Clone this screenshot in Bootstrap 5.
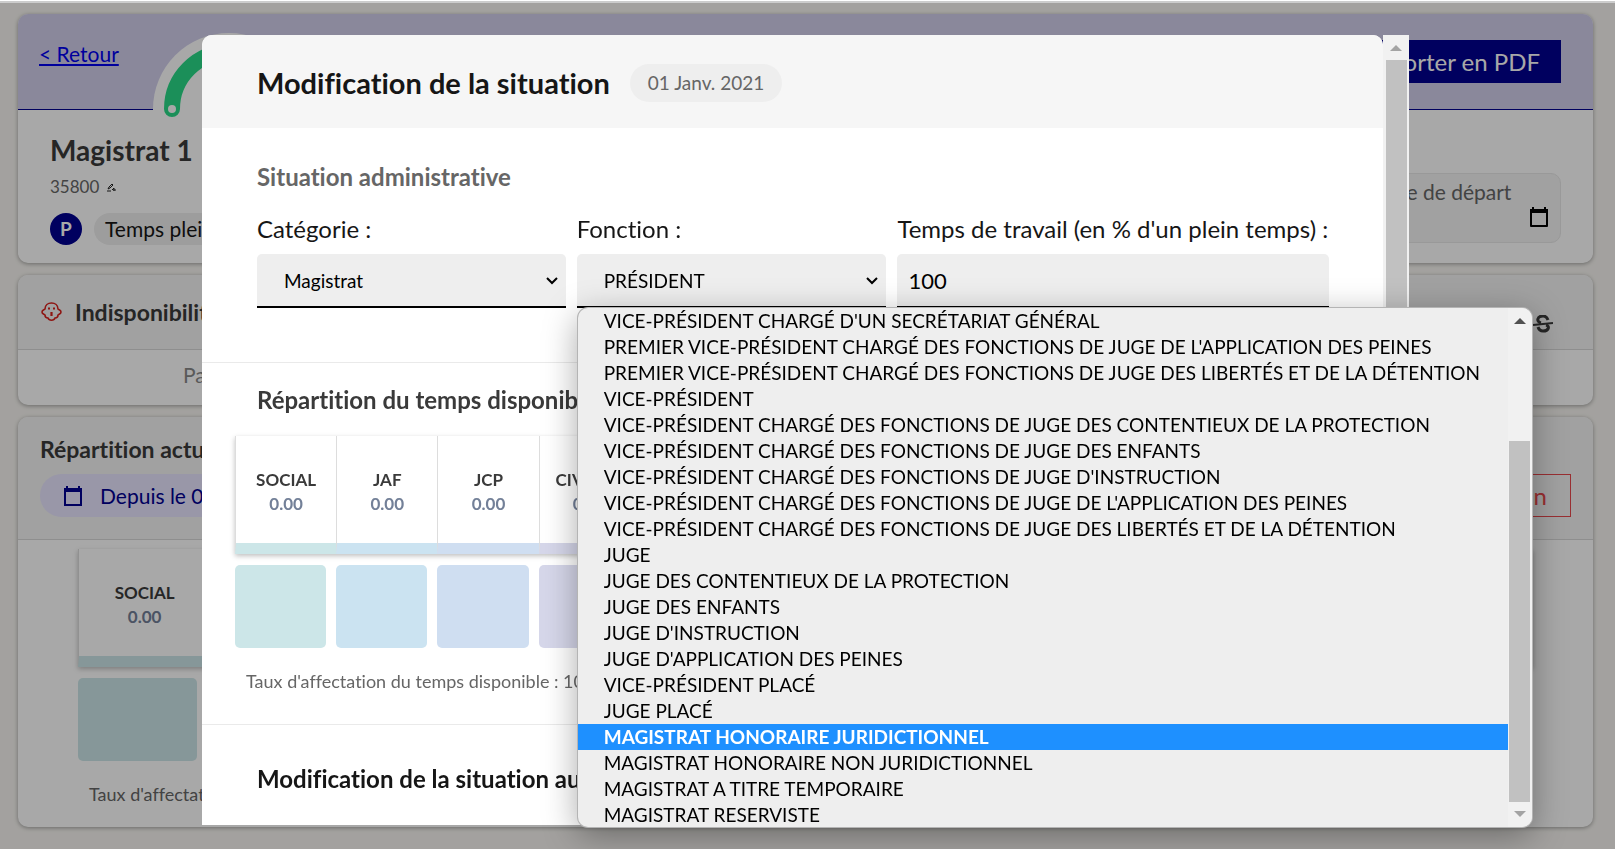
<!DOCTYPE html>
<html lang="fr">
<head>
<meta charset="utf-8">
<meta name="viewport" content="width=device-width, initial-scale=1">
<title>Modification de la situation</title>
<link href="https://cdn.jsdelivr.net/npm/bootstrap@5.3.0/dist/css/bootstrap.min.css" rel="stylesheet">
<style>
  :root { --navy: #000091; --ink: #161616; --soft-ink: #3a3a3a; --muted: #666; }
  body { font-family: Lato, "Open Sans", sans-serif; font-variant-ligatures: none; background: #f7f5f1; color: var(--ink); min-height: 100vh; overflow: hidden; }
  .topline { height: 3px; background: #ccc; border-top: 1px solid #fff; }
  .page { padding: 11px 22px 0 18px; display: grid; gap: 12px; }
  .panel { background: #fff; border-radius: 10px; box-shadow: 0 1px 4px rgba(0,0,0,.35); }
  .panel-top { background: #f4f4f4; border-bottom: 1px solid #d8d8d8; border-radius: 10px 10px 0 0; }
  .fs-title { font-size: 29px; line-height: 36px; font-weight: 700; }
  .fs-name { font-size: 28px; line-height: 34px; font-weight: 700; }
  .fs-section { font-size: 23px; line-height: 28px; font-weight: 700; }
  .fs-label { font-size: 24px; line-height: 28px; }
  .fs-text { font-size: 21px; line-height: 28px; }
  .fs-note { font-size: 17px; line-height: 24px; color: var(--muted); }
  .rate { font-size: 18px; line-height: 24px; color: var(--muted); padding: 21px 11px 22px; }
  .soft { color: var(--soft-ink); }

  /* agent sheet */
  .hero { height: 96px; background: #d2cfec; border-bottom: 1px solid var(--navy); border-radius: 10px 10px 0 0; padding: 26px 32px 0 21px; position: relative; }
  .hero a { color: #00e; }
  .gauge { position: absolute; left: 135px; top: 19px; }
  .btn-navy { background: var(--navy); color: #fff; border-radius: 0; height: 43px; padding: 0 21px; border: 0; }
  .identity { height: 153px; padding: 23px 32px 0 32px; }
  .initial { width: 32px; height: 32px; border-radius: 50%; background: var(--navy); color: #fff; font-weight: 700; font-size: 19px; }
  .tag { background: #eee; border-radius: 16px; height: 32px; padding: 2px 11px; }
  .leave { background: #f4f4f4; border: 1px solid #e8e8e8; border-radius: 10px; width: 200px; height: 70px; margin-top: 40px; padding: 4px 11px 0; color: var(--muted); }
  .leave label { padding-right: 38px; white-space: nowrap; }
  .since { background: #e8e5ff; color: var(--navy); border-radius: 22px; height: 43px; padding: 0 24px; gap: 18px; }
  .btn-cancel { color: #e8484c; border: 1px solid #e8484c; border-radius: 0; height: 43px; padding: 0 23px; }

  /* breakdown by litigation type */
  .split { display: grid; grid-template-columns: repeat(11, 1fr); }
  .split-head { box-shadow: 0 2px 5px rgba(0,0,0,.25); }
  .split-head > div { height: 118px; border-left: 1px solid #ddd; border-bottom: 11px solid; text-align: center; padding-top: 32px; font-size: 17px; line-height: 24px; font-weight: 700; color: var(--soft-ink); white-space: nowrap; }
  .split-head span { display: block; color: #738098; }
  .split-boxes { margin-top: 11px; }
  .split-boxes > div { height: 83px; border-radius: 5px; }
  .split > :nth-child(1) { --tone: #cce6e8; }
  .split > :nth-child(2) { --tone: #cbe3f1; }
  .split > :nth-child(3) { --tone: #cfdef1; }
  .split > :nth-child(n+4) { --tone: #d6d7ea; }
  .split-head > div { border-bottom-color: var(--tone); }
  .split-boxes > div { background: var(--tone); }
  .split-page { margin: 0 60px 0 60px; padding-top: 9px; }
  .split-page .split-boxes > div { margin-right: 13px; }
  .split-modal { margin: 0 35px 0 33px; }
  .split-modal .split-boxes > div { margin-right: 10px; }

  /* dialog */
  .modal-backdrop { top: 3px; height: auto; bottom: 0; opacity: .34; }
  .modal { overflow: visible; }
  .modal-dialog { max-width: none; margin: 35px 206px 24px 202px; height: calc(100vh - 59px); display: flex; }
  .sheet { flex: 1; min-width: 0; background: #fff; border-radius: 10px 10px 0 0; display: flex; flex-direction: column; }
  .sheet-head { background: #f6f6f6; height: 93px; border-radius: 10px 10px 0 0; padding: 2px 55px 0; gap: 20px; }
  .sheet-date { background: #eee; color: var(--muted); border-radius: 19px; font-size: 19px; line-height: 28px; padding: 5px 18px; }
  .sheet-part { border-bottom: 1px solid #eaeaea; }
  .sheet .fs-section { font-size: 24px; }
  .part-admin { height: 235px; padding: 35px 54px 0 55px; }
  .part-split { height: 362px; padding-top: 23px; }
  .fields { display: grid; grid-template-columns: 309fr 310fr 432fr; gap: 11px; margin-top: 24px; }
  .field-box { display: block; width: 100%; height: 54px; margin-top: 10px; border: 0; border-bottom: 2px solid #000; border-radius: 5px 5px 0 0; background-color: #eee; color: #000; font-size: 22px; padding: 0 11px; }
  select.field-box { font-size: 19px; padding: 2px 27px 0; appearance: none; background-repeat: no-repeat; background-position: right 7px center;
    background-image: url("data:image/svg+xml,%3Csvg xmlns='http://www.w3.org/2000/svg' width='14' height='9'%3E%3Cpath d='M2 2l5 5 5-5' fill='none' stroke='%23000' stroke-width='2'/%3E%3C/svg%3E"); }
  .bar { width: 26px; background: #f1f1f1; display: flex; flex-direction: column; align-items: center; padding: 10px 0 0; gap: 9px; }
  .bar-thumb { width: 21px; background: #c1c1c1; flex: 1; }

  /* open list */
  .choices { position: absolute; top: 100%; left: 1px; z-index: 5; width: 954px; height: 519px; background: #eee; border-radius: 10px; overflow: hidden; box-shadow: 0 0 0 1px #b4b4b4, 0 8px 34px rgba(0,0,0,.35); display: flex; }
  .choices button { display: block; width: 100%; height: 26px; border: 0; background: none; text-align: left; padding: 0 0 0 26px; font-size: 19px; line-height: 26px; color: #000; white-space: nowrap; }
  .choices button.chosen { background: #1e90ff; color: #fff; font-weight: 700; }
  .choices .bar { width: 24px; padding: 10px 0; flex: none; }
</style>
</head>
<body>
<div class="topline"></div>
<main class="page">
  <section class="panel">
    <div class="hero d-flex justify-content-between align-items-start">
      <a href="#" class="fs-text">&lt; Retour</a>
      <svg class="gauge" width="152" height="96" viewBox="0 0 152 96">
        <path d="M0 96V76a76 76 0 0 1 152 0v20z" fill="#fff"/>
        <path d="M19 76a57 57 0 0 1 114 0" fill="none" stroke="#2ada87" stroke-width="16" stroke-linecap="round"/>
        <circle cx="19" cy="76" r="4" fill="#fff"/>
      </svg>
      <button class="btn-navy fs-label">Exporter en PDF</button>
    </div>
    <div class="identity d-flex justify-content-between">
      <div>
        <h1 class="fs-name soft mb-0">Magistrat 1</h1>
        <div class="fs-note d-flex align-items-center gap-2" style="margin:8px 0 14px">35800
          <svg width="9" height="9" viewBox="0 0 9 9" fill="none" stroke="#222"><path d="M1 6l1-2 3-3 1 1-3 3zM0 8h4M5 7l2-2v3M6 7h3"/></svg>
        </div>
        <div class="d-flex align-items-center fs-text">
          <span class="initial d-flex align-items-center justify-content-center me-2">P</span>
          <span class="tag ms-1">Temps plein</span>
        </div>
      </div>
      <div class="leave fs-text">
        <label for="depart" class="d-block text-end">Date de départ</label>
        <button id="depart" class="border-0 bg-transparent p-0 ms-auto d-block lh-1" aria-label="Choisir la date">
          <svg class="d-block" width="20" height="22" viewBox="0 0 20 22"><path d="M2 4h16v16H2z" fill="none" stroke="#000" stroke-width="2" stroke-linejoin="round"/><path d="M1 3h18v4H1zM3 1h2v3H3zM15 1h2v3h-2z"/></svg>
        </button>
      </div>
    </div>
  </section>

  <section class="panel">
    <div class="panel-top d-flex align-items-center justify-content-between px-4" style="height:75px">
      <h2 class="fs-section soft mb-0 d-flex align-items-center" style="gap:13px">
        <svg style="margin-left:-1px" width="21" height="20" viewBox="0 0 21 20" fill="none" stroke="#d8201c" stroke-width="1.6"><path d="M4 7C4 3 7 1 10.500 1S17 3 17 7c1 1 3 1 3 3s-2 2-3 3c0 2-1 3-3 3-1 3-6 3-7 0-2 0-3-1-3-3-1-1-3-1-3-3s2-2 3-3z"/><path d="M7 6.500h2M12 6.500h2M10.500 10v4" stroke-width="2.200"/></svg>
        Indisponibilités
      </h2>
      <svg class="me-3 mt-4" width="20" height="18" viewBox="0 0 20 18" fill="none" stroke="#3a3a3a" stroke-width="3"><path d="M15 5c-1-3-3-4-5-4-6 0-7 6-2 7M5 12c1 3 3 4 5 4 6 0 7-5 3-6"/><path d="M0 10l20-2" stroke-width="2"/></svg>
    </div>
    <div class="fs-text" style="height:55px;padding:11px 165px;color:#888">Pas d'indisponibilité renseignée</div>
  </section>

  <section class="panel" style="height:410px">
    <div class="panel-top d-flex justify-content-between align-items-end" style="height:123px;padding:0 22px 22px">
      <div>
        <h2 class="fs-section soft" style="margin-bottom:11px">Répartition actuelle</h2>
        <div class="since fs-text d-flex align-items-center">
          <svg width="18" height="20" viewBox="0 0 18 20"><path d="M1 3h16v16H1z" fill="none" stroke="#000091" stroke-width="2"/><path d="M0 2h18v4H0zM2 0h2v3H2zM14 0h2v3h-2z" fill="#000091"/></svg>
          Depuis le 01/01/2021
        </div>
      </div>
      <button class="btn-cancel bg-transparent fs-label">Modifier la situation</button>
    </div>
    <div class="split-page">
      <div class="split split-head">
        <div>SOCIAL<span>0.00</span></div><div>JAF<span>0.00</span></div><div>JCP<span>0.00</span></div><div>CIVIL NS<span>0.00</span></div><div></div><div></div><div></div><div></div><div></div><div></div><div></div>
      </div>
      <div class="split split-boxes"><div></div><div></div><div></div></div>
      <p class="rate mb-0">Taux d'affectation du temps disponible : 100%</p>
    </div>
  </section>
</main>

<div class="modal-backdrop"></div>
<div class="modal d-block" role="dialog" aria-labelledby="dlg">
  <div class="modal-dialog">
    <div class="sheet">
      <header class="sheet-head d-flex align-items-center">
        <h2 class="fs-title mb-0" id="dlg">Modification de la situation</h2>
        <span class="sheet-date">01 Janv. 2021</span>
      </header>
      <section class="sheet-part part-admin">
        <h3 class="fs-section mb-0" style="color:#666">Situation administrative</h3>
        <div class="fields">
          <div>
            <label class="fs-label" for="cat">Catégorie :</label>
            <select class="field-box" id="cat"><option>Magistrat</option></select>
          </div>
          <div class="position-relative">
            <label class="fs-label" for="fct">Fonction :</label>
            <select class="field-box" id="fct"><option>PRÉSIDENT</option></select>
            <div class="choices">
              <div class="flex-grow-1" role="listbox" aria-label="Fonction">
                <button role="option">VICE-PRÉSIDENT CHARGÉ D'UN SECRÉTARIAT GÉNÉRAL</button>
                <button role="option">PREMIER VICE-PRÉSIDENT CHARGÉ DES FONCTIONS DE JUGE DE L'APPLICATION DES PEINES</button>
                <button role="option">PREMIER VICE-PRÉSIDENT CHARGÉ DES FONCTIONS DE JUGE DES LIBERTÉS ET DE LA DÉTENTION</button>
                <button role="option">VICE-PRÉSIDENT</button>
                <button role="option">VICE-PRÉSIDENT CHARGÉ DES FONCTIONS DE JUGE DES CONTENTIEUX DE LA PROTECTION</button>
                <button role="option">VICE-PRÉSIDENT CHARGÉ DES FONCTIONS DE JUGE DES ENFANTS</button>
                <button role="option">VICE-PRÉSIDENT CHARGÉ DES FONCTIONS DE JUGE D'INSTRUCTION</button>
                <button role="option">VICE-PRÉSIDENT CHARGÉ DES FONCTIONS DE JUGE DE L'APPLICATION DES PEINES</button>
                <button role="option">VICE-PRÉSIDENT CHARGÉ DES FONCTIONS DE JUGE DES LIBERTÉS ET DE LA DÉTENTION</button>
                <button role="option">JUGE</button>
                <button role="option">JUGE DES CONTENTIEUX DE LA PROTECTION</button>
                <button role="option">JUGE DES ENFANTS</button>
                <button role="option">JUGE D'INSTRUCTION</button>
                <button role="option">JUGE D'APPLICATION DES PEINES</button>
                <button role="option">VICE-PRÉSIDENT PLACÉ</button>
                <button role="option">JUGE PLACÉ</button>
                <button role="option" class="chosen" aria-selected="true">MAGISTRAT HONORAIRE JURIDICTIONNEL</button>
                <button role="option">MAGISTRAT HONORAIRE NON JURIDICTIONNEL</button>
                <button role="option">MAGISTRAT A TITRE TEMPORAIRE</button>
                <button role="option">MAGISTRAT RESERVISTE</button>
              </div>
              <div class="bar">
                <svg width="12" height="6"><path d="M0 6l6-6 6 6z" fill="#505050"/></svg>
                <div style="flex:0 0 99px"></div>
                <div class="bar-thumb"></div>
                <svg width="12" height="6"><path d="M0 0l6 6 6-6z" fill="#a3a3a3"/></svg>
              </div>
            </div>
          </div>
          <div>
            <label class="fs-label text-nowrap" for="pct">Temps de travail (en % d'un plein temps) :</label>
            <input class="field-box" id="pct" value="100">
          </div>
        </div>
      </section>
      <section class="sheet-part part-split">
        <h3 class="fs-section soft mb-0" style="padding:0 55px 22px">Répartition du temps disponible</h3>
        <div class="split-modal">
          <div class="split split-head">
            <div>SOCIAL<span>0.00</span></div><div>JAF<span>0.00</span></div><div>JCP<span>0.00</span></div><div>CIVIL NS<span>0.00</span></div><div></div><div></div><div></div><div></div><div></div><div></div><div></div>
          </div>
          <div class="split split-boxes"><div></div><div></div><div></div><div></div></div>
          <p class="rate mb-0">Taux d'affectation du temps disponible : 100%</p>
        </div>
      </section>
      <section style="padding:40px 55px 0">
        <h3 class="fs-section mb-0">Modification de la situation au 01/01/2021</h3>
      </section>
    </div>
    <div class="bar">
      <svg width="12" height="6"><path d="M0 6l6-6 6 6z" fill="#a3a3a3"/></svg>
      <div class="bar-thumb"></div>
    </div>
  </div>
</div>
<script src="https://cdn.jsdelivr.net/npm/bootstrap@5.3.0/dist/js/bootstrap.bundle.min.js"></script>
</body>
</html>
